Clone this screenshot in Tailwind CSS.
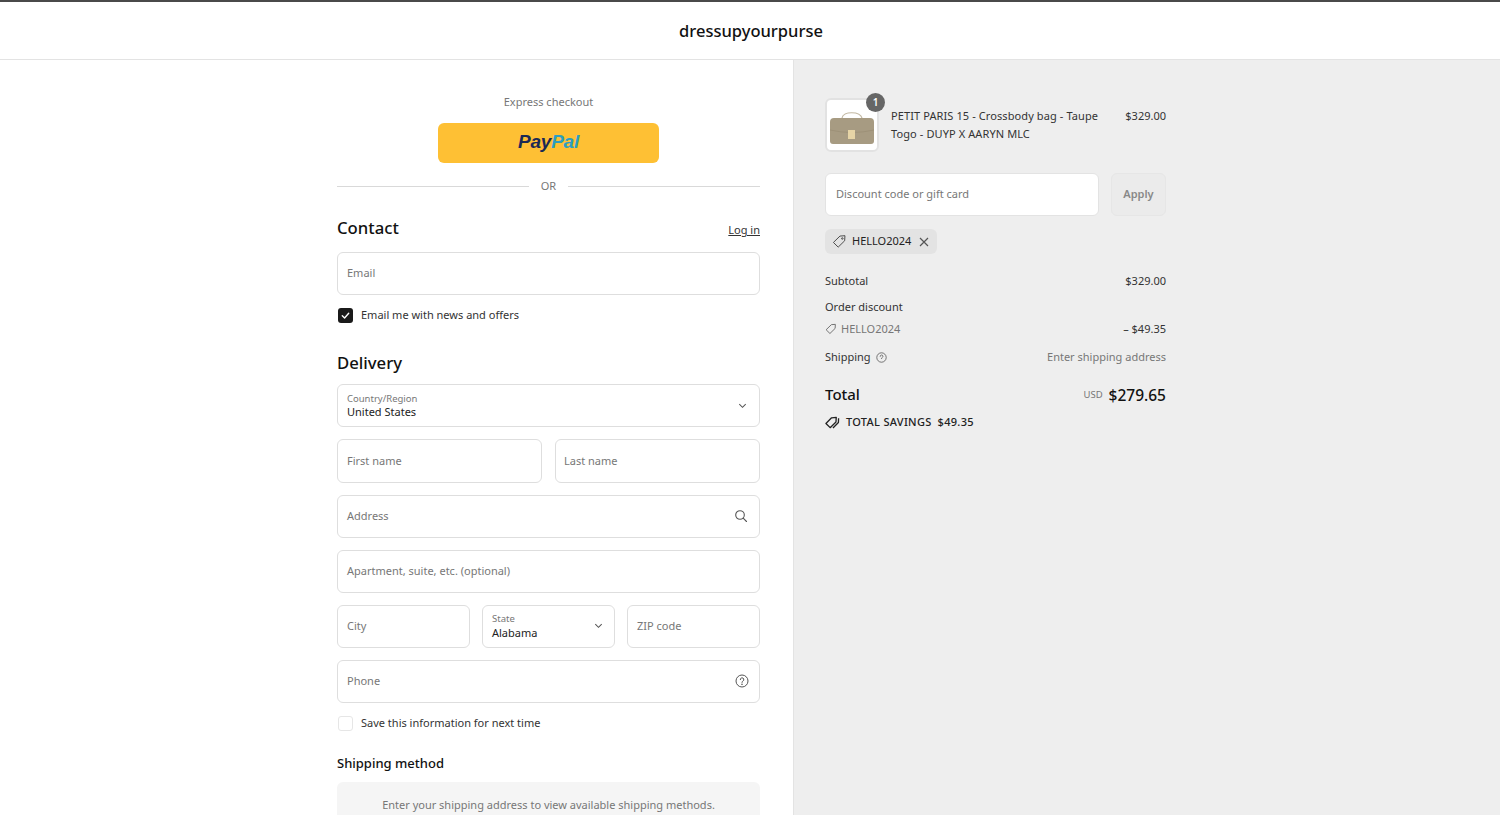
<!DOCTYPE html>
<html lang="en">
<head>
<meta charset="utf-8">
<title>Checkout</title>
<script src="https://cdn.jsdelivr.net/npm/@tailwindcss/browser@4"></script>
</head>
<body class="h-[815px] overflow-hidden bg-white font-['Noto_Sans','Open_Sans',sans-serif] text-[11px] text-[#333]">
<header class="flex h-[60px] items-center justify-center border-t-2 border-b border-t-[#4a4a4a] border-b-[#e3e3e3] pt-[2px]">
  <span class="ml-[2px] text-[16.5px] font-medium text-[#111]">dressupyourpurse</span>
</header>
<main class="flex h-[755px] overflow-hidden">
  <section class="flex w-[794px] justify-end border-r border-[#e3e3e3] pr-[33px]">
    <div class="w-[423px] pt-[33px]">
      <p class="h-[18px] text-center leading-[18px] text-[#777]">Express checkout</p>
      <div class="mt-[12px] flex justify-center">
        <button class="flex h-[40px] w-[221px] items-center justify-center rounded-[6px] bg-[#fec034] pb-[2px] font-['Liberation_Sans',sans-serif] text-[19px] font-bold tracking-[-0.2px] italic"><span class="text-[#1b2a55]">Pay</span><span class="text-[#2c9ec0]">Pal</span></button>
      </div>
      <div class="mt-[14px] flex h-[18px] items-center gap-[12px] text-[#777]">
        <div class="h-px flex-1 bg-[#d9d9d9]"></div><span>OR</span><div class="h-px flex-1 bg-[#d9d9d9]"></div>
      </div>
      <div class="mt-[19px] flex h-[28px] items-center justify-between">
        <h2 class="text-[16.7px] font-medium text-[#111]">Contact</h2>
        <a class="mt-[5px] text-[#333] underline">Log in</a>
      </div>
      <div class="mt-[10px] flex h-[43px] items-center rounded-[6px] border border-[#dedede] px-[9px] text-[#777]">Email</div>
      <label class="mt-[11px] flex h-[18px] items-center gap-[8px] pl-[1px]">
        <span class="flex h-[15px] w-[15px] items-center justify-center rounded-[3px] bg-[#1a1a1a]">
          <svg viewBox="0 0 12 12" class="h-[11px] w-[11px]" fill="none" stroke="#fff" stroke-width="1.5" stroke-linecap="round" stroke-linejoin="round"><path d="M2.500 6.300 5 8.700 9.500 3.500"/></svg>
        </span>
        <span>Email me with news and offers</span>
      </label>
      <h2 class="mt-[25px] h-[28px] text-[16.7px] leading-[28px] font-medium text-[#111]">Delivery</h2>
      <div class="mt-[7px] flex h-[43px] items-center justify-between rounded-[6px] border border-[#dedede] pr-[11px] pl-[9px]">
        <div class="flex flex-col"><span class="text-[9.5px] leading-[13px] text-[#777]">Country/Region</span><span class="leading-[14px] text-[#222]">United States</span></div>
        <svg viewBox="0 0 12 12" class="h-[11px] w-[11px]" fill="none" stroke="#555" stroke-width="1.100"><path d="M2.500 4.500 6 8l3.500-3.500"/></svg>
      </div>
      <div class="mt-[12px] grid h-[44px] grid-cols-2 gap-[13px]">
        <div class="flex items-center rounded-[6px] border border-[#dedede] px-[9px] text-[#777]">First name</div>
        <div class="flex items-center rounded-[6px] border border-[#dedede] px-[8px] text-[#777]">Last name</div>
      </div>
      <div class="mt-[12px] flex h-[43px] items-center justify-between rounded-[6px] border border-[#dedede] pr-[11px] pl-[9px] text-[#777]">
        <span>Address</span>
        <svg viewBox="0 0 14 14" class="mb-[2px] h-[14px] w-[14px]" fill="none" stroke="#555" stroke-width="1.100" stroke-linecap="round"><circle cx="6" cy="6" r="4.300"/><path d="m9.200 9.200 3.300 3.300"/></svg>
      </div>
      <div class="mt-[12px] flex h-[43px] items-center rounded-[6px] border border-[#dedede] px-[9px] pb-[1px] text-[#777]">Apartment, suite, etc. (optional)</div>
      <div class="mt-[12px] grid h-[43px] grid-cols-3 gap-[12px]">
        <div class="flex items-center rounded-[6px] border border-[#dedede] px-[9px] text-[#777]">City</div>
        <div class="flex items-center justify-between rounded-[6px] border border-[#dedede] pr-[10px] pb-[2px] pl-[9px]">
          <div class="flex flex-col"><span class="text-[9.5px] leading-[13px] text-[#777]">State</span><span class="leading-[15px] text-[#222]">Alabama</span></div>
          <svg viewBox="0 0 12 12" class="h-[11px] w-[11px]" fill="none" stroke="#555" stroke-width="1.100"><path d="M2.500 4.500 6 8l3.500-3.500"/></svg>
        </div>
        <div class="flex items-center rounded-[6px] border border-[#dedede] px-[9px] text-[#777]">ZIP code</div>
      </div>
      <div class="mt-[12px] flex h-[43px] items-center justify-between rounded-[6px] border border-[#dedede] pr-[10px] pl-[9px] text-[#777]">
        <span>Phone</span>
        <svg viewBox="0 0 14 14" class="mb-[1px] h-[14px] w-[14px]" fill="none" stroke="#555" stroke-width="1"><circle cx="7" cy="7" r="6"/><path d="M5.300 5.600a1.750 1.750 0 1 1 2.600 1.500c-.6.350-.9.700-.9 1.300" stroke-linecap="round"/><circle cx="7" cy="10.200" r=".35" fill="#555"/></svg>
      </div>
      <label class="mt-[11px] flex h-[18px] items-center gap-[8px] pl-[1px]">
        <span class="h-[15px] w-[15px] rounded-[3px] border border-[#e6e6e6]"></span>
        <span>Save this information for next time</span>
      </label>
      <h3 class="mt-[20px] h-[22px] text-[13px] leading-[22px] font-medium text-[#111]">Shipping method</h3>
      <div class="mt-[8px] flex h-[60px] items-start justify-center rounded-[6px] bg-[#f5f5f5] pt-[15px] text-[#777]">Enter your shipping address to view available shipping methods.</div>
    </div>
  </section>
  <aside class="flex-1 bg-[#eeeeee] pt-[38px] pl-[31px]">
    <div class="w-[341px]">
      <div class="flex items-start">
        <div class="relative h-[54px] w-[54px] rounded-[6px] border-2 border-[#e2e2e2] bg-white">
          <svg viewBox="0 0 50 50" class="h-full w-full">
            <path d="M15 18c1-7 18-7 20 0" fill="none" stroke="#c2b8a2" stroke-width="1.200"/>
            <path d="M3 22q0-4 4-4h36q4 0 4 4v19q0 3-3 3H6q-3 0-3-3z" fill="#a79b82"/>
            <path d="M3 30q22 5 44 0" fill="none" stroke="#9a8e75" stroke-width=".8"/>
            <rect x="21" y="30" width="7" height="9" fill="#e6d4a6"/>
          </svg>
          <span class="absolute -top-[7px] -right-[8px] flex h-[19px] w-[19px] items-center justify-center rounded-full bg-[#666] text-[10px] font-semibold text-white">1</span>
        </div>
        <p class="ml-[12px] w-[222px] pt-[9px] leading-[18px] tracking-[0.1px]">PETIT PARIS 15 - Crossbody bag - Taupe Togo - DUYP X AARYN MLC</p>
        <span class="ml-auto pt-[9px] leading-[18px]">$329.00</span>
      </div>
      <div class="mt-[21px] flex gap-[12px]">
        <div class="flex h-[43px] flex-1 items-center rounded-[6px] border border-[#e3e3e3] bg-white px-[10px] text-[#777]">Discount code or gift card</div>
        <button class="h-[43px] w-[55px] rounded-[6px] border border-[#e6e6e6] bg-[#ebebeb] font-semibold text-[#888]">Apply</button>
      </div>
      <div class="mt-[13px] flex">
        <div class="flex h-[25px] items-center gap-[5px] rounded-[6px] bg-[#e3e3e3] px-[7px]">
          <svg viewBox="0 0 16 16" class="h-[15px] w-[15px]" fill="none" stroke="#444" stroke-width="1" stroke-linejoin="round"><path d="M1.500 9 8.500 2.200l5.300-.4-.3 5.400-6.900 6.800z"/><circle cx="11" cy="4.800" r=".8"/></svg>
          <span class="text-[#222]">HELLO2024</span>
          <svg viewBox="0 0 12 12" class="ml-[2px] h-[12px] w-[12px]" fill="none" stroke="#555" stroke-width="1.200"><path d="m2 2 8 8M10 2l-8 8"/></svg>
        </div>
      </div>
      <div class="mt-[18px] flex h-[18px] items-center justify-between"><span>Subtotal</span><span>$329.00</span></div>
      <div class="mt-[8px] flex h-[18px] items-center"><span>Order discount</span></div>
      <div class="mt-[4px] flex h-[18px] items-center justify-between">
        <span class="flex items-center gap-[4px] text-[#777]"><svg viewBox="0 0 16 16" class="h-[12px] w-[12px]" fill="none" stroke="#666" stroke-width="1.200" stroke-linejoin="round"><path d="M1.500 9 8.500 2.200l5.300-.4-.3 5.400-6.900 6.800z"/></svg>HELLO2024</span>
        <span>– $49.35</span>
      </div>
      <div class="mt-[10px] flex h-[18px] items-center justify-between">
        <span class="flex items-center gap-[5px]">Shipping <svg viewBox="0 0 14 14" class="h-[11px] w-[11px]" fill="none" stroke="#555" stroke-width="1"><circle cx="7" cy="7" r="6"/><path d="M5.300 5.600a1.750 1.750 0 1 1 2.600 1.500c-.6.350-.9.700-.9 1.300" stroke-linecap="round"/></svg></span>
        <span class="text-[#777]">Enter shipping address</span>
      </div>
      <div class="mt-[17px] flex h-[24px] items-center justify-between">
        <span class="mb-[1px] text-[15px] font-medium text-[#111]">Total</span>
        <span class="mt-[1px] flex items-center gap-[6px]"><span class="text-[9.5px] text-[#777]">USD</span><span class="text-[15.5px] font-medium text-[#111]">$279.65</span></span>
      </div>
      <div class="mt-[6px] flex h-[18px] items-center gap-[6px] font-medium tracking-[0.3px] text-[#222]">
        <svg viewBox="0 0 16 16" class="h-[15px] w-[15px]" fill="none" stroke="#222" stroke-width="1.400" stroke-linejoin="round"><path d="M1 9 7 3l5-.5-.3 5L5.500 13.500z"/><path d="m14.500 3.500-.2 4.500-5.800 5.800"/></svg>
        <span>TOTAL SAVINGS</span><span>$49.35</span>
      </div>
    </div>
  </aside>
</main>
</body>
</html>
